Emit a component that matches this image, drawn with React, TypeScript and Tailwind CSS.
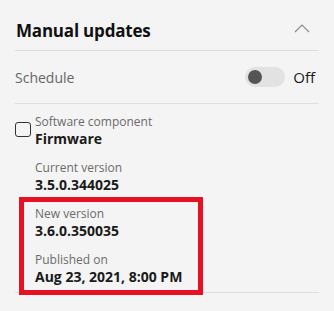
function Field({ label, value }: { label: string; value: string }) {
  return (
    <div className="flex flex-col">
      <span className="text-[12px] leading-[16px] text-[#6b6b6b]">{label}</span>
      <span className="text-[14px] leading-[18px] font-bold text-[#1a1a1a]">{value}</span>
    </div>
  )
}

export default function App() {
  return (
    <div
      className="relative w-[334px] h-[311px] bg-[#f4f4f4] px-[15px] overflow-hidden"
      style={{ fontFamily: '"Open Sans", "Noto Sans", sans-serif' }}
    >
      <div className="flex items-center justify-between h-[51px] pt-[12px] border-b border-[#dedede]">
        <h2 className="text-[17px] font-bold text-[#111] pl-[1px] tracking-[-0.2px]">Manual updates</h2>
        <svg className="w-[16px] h-[9px] mr-[9px] -mt-[6px]" viewBox="0 0 16 9" fill="none" stroke="#8a8a8a" strokeWidth="1.1">
          <polyline points="1,8 8,1 15,8" />
        </svg>
      </div>

      <div className="flex items-center justify-between h-[53px] border-b border-[#dedede]">
        <span className="text-[14px] text-[#666]">Schedule</span>
        <div className="flex items-center gap-[8px] mr-[4px]">
          <div className="w-[40px] h-[20px] rounded-full bg-[#e2e2e2] flex items-center px-[3px]">
            <div className="w-[14px] h-[14px] rounded-full bg-[#555]" />
          </div>
          <span className="text-[15px] text-[#1a1a1a]">Off</span>
        </div>
      </div>

      <div className="flex flex-col gap-[12px] pt-[10px] pb-[6px] border-b border-[#dedede]">
        <div className="flex items-start gap-[4px]">
          <div className="mt-[8px] w-[16px] h-[15px] rounded-[3px] border border-[#333] bg-[#f4f4f4] shrink-0" />
          <Field label="Software component" value="Firmware" />
        </div>
        <div className="pl-[20px] flex flex-col gap-[12px]">
          <Field label="Current version" value="3.5.0.344025" />
          <Field label="New version" value="3.6.0.350035" />
          <Field label="Published on" value="Aug 23, 2021, 8:00 PM" />
        </div>
      </div>

      <div className="absolute left-[19px] top-[197px] w-[184px] h-[98px] border-[5px] border-[#e81123] pointer-events-none" />
    </div>
  )
}
